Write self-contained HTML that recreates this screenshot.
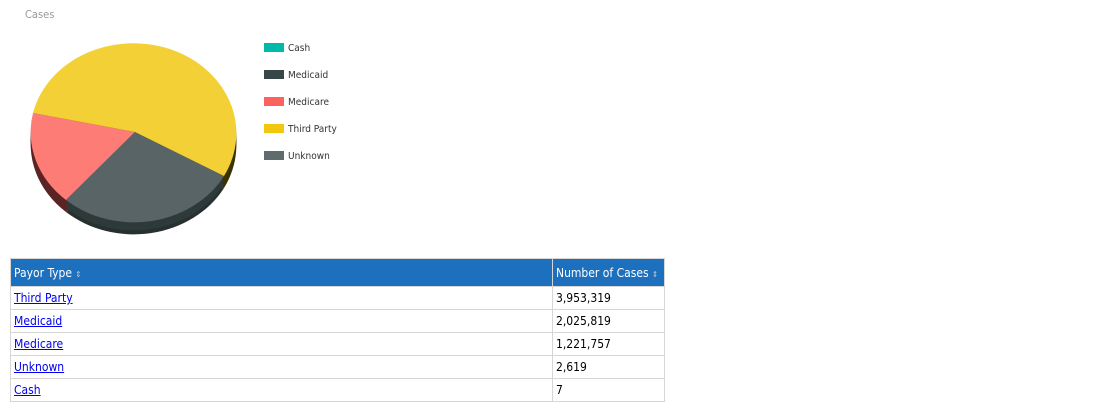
<!DOCTYPE html>
<html><head><meta charset="utf-8"><style>
body{margin:0;width:1100px;height:410px;background:#fff;font-family:"Segoe UI","DejaVu Sans Condensed","Liberation Sans",sans-serif;position:relative;overflow:hidden}
.t{position:absolute;left:25px;top:8px;font-size:11px;color:#999}
.lg{position:absolute;left:264px;font-size:10px;color:#333}
.lg i{display:inline-block;width:20px;height:9px;vertical-align:-1px;margin-right:4px}
table{position:absolute;left:10px;top:258px;width:655px;border-collapse:collapse;font-size:12px}
td,th{border:1px solid #d6d6d6;padding:0 3px;height:22px;text-align:left;font-weight:normal}
th{background:#1c70bd;color:#fff;height:27px;border-color:#d6d6d6}
a{color:#00e}
.s{font-size:8px;color:#ccc}
</style></head><body>
<div class="t">Cases</div>
<svg width="260" height="250" style="position:absolute;left:0;top:0">
<g transform="translate(0,12)"><path d="M135,132 L66,200 A103,90 0 0,1 33,113 Z" fill="#5a2424"/><path d="M135,132 L224,176 A103,90 0 0,1 66,200 Z" fill="#26302f"/><path d="M135,132 L33,113 A103,90 0 1,1 224,176 Z" fill="#3a3200"/></g>
<g transform="translate(0,8)"><path d="M135,132 L66,200 A103,90 0 0,1 33,113 Z" fill="#5a2424"/><path d="M135,132 L224,176 A103,90 0 0,1 66,200 Z" fill="#2e3a3a"/><path d="M135,132 L33,113 A103,90 0 1,1 224,176 Z" fill="#3a3200"/></g>
<g transform="translate(0,4)"><path d="M135,132 L66,200 A103,90 0 0,1 33,113 Z" fill="#5a2424"/><path d="M135,132 L224,176 A103,90 0 0,1 66,200 Z" fill="#2e3a3a"/><path d="M135,132 L33,113 A103,90 0 1,1 224,176 Z" fill="#3a3200"/></g>
<path d="M135,132 L66,200 A103,90 0 0,1 33,113 Z" fill="#fe7c76"/>
<path d="M135,132 L224,176 A103,90 0 0,1 66,200 Z" fill="#596466"/>
<path d="M135,132 L33,113 A103,90 0 1,1 224,176 Z" fill="#f3d036"/>
</svg>
<div class="lg" style="top:43px"><i style="background:#00b9a9"></i>Cash</div>
<div class="lg" style="top:70px"><i style="background:#374649"></i>Medicaid</div>
<div class="lg" style="top:97px"><i style="background:#fd625e"></i>Medicare</div>
<div class="lg" style="top:124px"><i style="background:#f2c80f"></i>Third Party</div>
<div class="lg" style="top:151px"><i style="background:#5f6b6d"></i>Unknown</div>
<table>
<tr><th style="width:535px">Payor Type <span class="s">⇕</span></th><th>Number of Cases <span class="s">⇕</span></th></tr>
<tr><td><a href="#">Third Party</a></td><td>3,953,319</td></tr>
<tr><td><a href="#">Medicaid</a></td><td>2,025,819</td></tr>
<tr><td><a href="#">Medicare</a></td><td>1,221,757</td></tr>
<tr><td><a href="#">Unknown</a></td><td>2,619</td></tr>
<tr><td><a href="#">Cash</a></td><td>7</td></tr>
</table>
</body></html>
